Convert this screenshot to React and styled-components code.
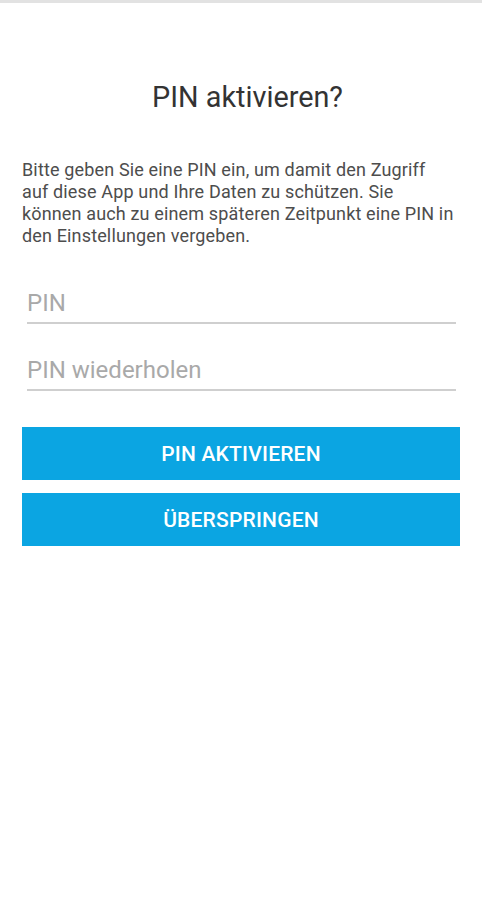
import React from "react";
import styled, { createGlobalStyle } from "styled-components";

const Global = createGlobalStyle`
  html, body { margin: 0; padding: 0; background: #fff; }
  body { font-family: Roboto, "Noto Sans", Arial, sans-serif; }
  * { box-sizing: border-box; }
`;

const Screen = styled.div`
  width: 482px;
  min-height: 900px;
  background: #fff;
  display: flex;
  flex-direction: column;
`;

const TopBar = styled.div`
  height: 3px;
  background: #e2e2e2;
`;

const Content = styled.div`
  display: flex;
  flex-direction: column;
  padding: 0 19px 0 22px;
`;

const Title = styled.h1`
  margin: 76px 0 0;
  padding-left: 10px;
  font-size: 28.8px;
  font-weight: 400;
  color: #333;
  text-align: center;
  line-height: 36px;
`;

const Description = styled.p`
  margin: 44px 0 0;
  font-size: 18px;
  line-height: 22px;
  letter-spacing: 0.15px;
  color: #4d4d4d;
  white-space: nowrap;
`;

const Field = styled.div`
  margin: ${(p) => p.$top}px 7px 0 5px;
  display: flex;
  flex-direction: column;
`;

const Input = styled.input`
  border: none;
  border-bottom: 2px solid #cfcfcf;
  outline: none;
  padding: 0 0 4px;
  height: 36px;
  font-family: Roboto, "Noto Sans", Arial, sans-serif;
  font-size: 24px;
  line-height: 30px;
  color: #333;
  background: transparent;
  &::placeholder { color: #a9a9a9; }
`;

const Button = styled.button`
  margin: ${(p) => p.$top}px 3px 0 0;
  height: 53px;
  border: none;
  padding: 0;
  background: #0ba5e2;
  color: #fff;
  font-family: Roboto, "Noto Sans", Arial, sans-serif;
  font-weight: 500;
  font-size: 21px;
  letter-spacing: 0.2px;
  text-transform: uppercase;
`;

export default function App() {
  return (
    <>
      <Global />
      <Screen>
        <TopBar />
        <Content>
          <Title>PIN aktivieren?</Title>
          <Description>
            Bitte geben Sie eine PIN ein, um damit den Zugriff
            <br />
            auf diese App und Ihre Daten zu schützen. Sie
            <br />
            können auch zu einem späteren Zeitpunkt eine PIN in
            <br />
            den Einstellungen vergeben.
          </Description>
          <Field $top={41}>
            <Input placeholder="PIN" type="password" />
          </Field>
          <Field $top={31}>
            <Input placeholder="PIN wiederholen" type="password" />
          </Field>
          <Button $top={36}>PIN aktivieren</Button>
          <Button $top={13}>Überspringen</Button>
        </Content>
      </Screen>
    </>
  );
}
